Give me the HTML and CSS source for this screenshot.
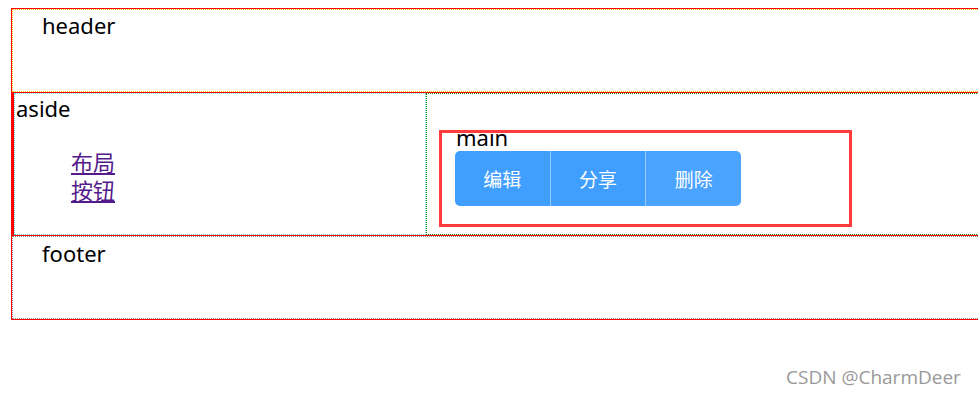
FILE: index.html
```html
<!DOCTYPE html>
<html lang="zh-CN">
<head>
    <meta charset="UTF-8">
    <meta name="viewport" content="width=device-width, initial-scale=1.0">
    <title>布局</title>
    <link rel="stylesheet" href="styles.css">
</head>
<body>
    <div class="container">
        <div class="header">header</div>
        <div class="section">
            <div class="aside">
                aside
                <ul class="menu">
                    <li><a href="#">布局</a></li>
                    <li><a href="#">按钮</a></li>
                </ul>
            </div>
            <div class="main">
                <div class="main-title">main</div>
                <div class="btn-group">
                    <button class="btn">编辑</button>
                    <button class="btn">分享</button>
                    <button class="btn btn-hover">删除</button>
                </div>
                <div class="highlight"></div>
            </div>
        </div>
        <div class="footer">footer</div>
    </div>
    <div class="watermark">CSDN @CharmDeer</div>
</body>
</html>
```

FILE: styles.css
```css
html, body {
    overflow: hidden;
}

body {
    margin: 8px 0 0 11px;
    font-family: "Noto Sans", "Noto Sans CJK SC", sans-serif;
    font-size: 22px;
    line-height: 28px;
    color: #000;
    background: #fff;
}

.container {
    width: 1100px;
    border: 1px solid #f00;
}

.header {
    height: 83px;
    box-sizing: border-box;
    padding: 1px 29px 0;
    border: 1px dotted #f2c200;
}

.section {
    display: flex;
    border: 1px solid #f00;
    border-left-width: 2px;
}

.aside {
    width: 409px;
    border: 1px dotted #5fd6d6;
    padding-left: 1px;
}

.menu {
    list-style: none;
    margin: 26px 0 30px;
    padding-left: 55px;
}

.menu a {
    color: #551a8b;
}

.main {
    position: relative;
    flex: 1;
    border: 1px dotted #0a8a0a;
    padding: 29px 28px 27px;
}

.main-title {
    margin-left: 1px;
}

.btn-group {
    display: flex;
    width: 286px;
    height: 55px;
    border-radius: 5px;
    overflow: hidden;
}

.btn {
    flex: 1;
    border: none;
    margin: 0;
    padding: 0;
    background: #409eff;
    color: #fff;
    font-family: "Noto Sans CJK SC", sans-serif;
    font-size: 19px;
    border-left: 1px solid rgba(255, 255, 255, 0.45);
}

.btn:first-child {
    border-left: none;
}

.btn-hover {
    background: #4aa3ff;
}

.highlight {
    position: absolute;
    left: 12px;
    top: 36px;
    width: 407px;
    height: 91px;
    border: 3px solid #ff3b3b;
}

.footer {
    height: 83px;
    box-sizing: border-box;
    padding: 2px 29px 0;
    border: 1px dotted #888;
}

.watermark {
    position: absolute;
    left: 786px;
    top: 363px;
    font-size: 19px;
    color: #999;
    font-family: "Open Sans", sans-serif;
}
```
